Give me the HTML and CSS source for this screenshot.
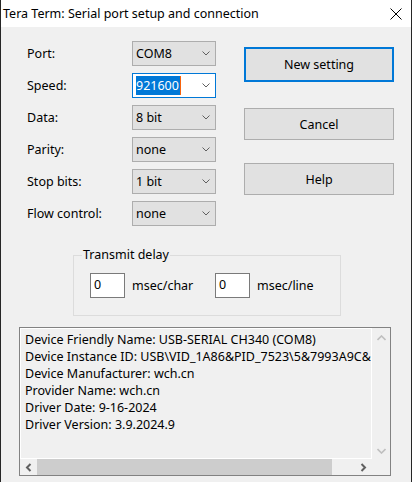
FILE: index.html
```html
<!DOCTYPE html>
<html lang="en">
<head>
  <meta charset="UTF-8">
  <title>Tera Term: Serial port setup and connection</title>
  <link rel="stylesheet" href="styles.css">
</head>
<body>
  <div class="window">
    <div class="titlebar">
      <span class="title">Tera Term: Serial port setup and connection</span>
      <svg class="close" width="12" height="12" viewBox="0 0 12 12">
        <path d="M0.5 0.5L11.5 11.5M11.5 0.5L0.5 11.5" stroke="#000" stroke-width="1" fill="none"/>
      </svg>
    </div>
    <div class="dialog">
      <div class="top">
        <div class="form">
          <label>Port:</label>
          <div class="combo"><span>COM8</span><svg class="chev" width="8" height="5" viewBox="0 0 8 5"><polyline points="0.5,0.5 4,4 7.5,0.5"/></svg></div>
          <label>Speed:</label>
          <div class="combo edit"><span class="sel">921600</span><span class="caret"></span><svg class="chev" width="8" height="5" viewBox="0 0 8 5"><polyline points="0.5,0.5 4,4 7.5,0.5"/></svg></div>
          <label>Data:</label>
          <div class="combo"><span>8 bit</span><svg class="chev" width="8" height="5" viewBox="0 0 8 5"><polyline points="0.5,0.5 4,4 7.5,0.5"/></svg></div>
          <label>Parity:</label>
          <div class="combo"><span>none</span><svg class="chev" width="8" height="5" viewBox="0 0 8 5"><polyline points="0.5,0.5 4,4 7.5,0.5"/></svg></div>
          <label>Stop bits:</label>
          <div class="combo"><span>1 bit</span><svg class="chev" width="8" height="5" viewBox="0 0 8 5"><polyline points="0.5,0.5 4,4 7.5,0.5"/></svg></div>
          <label>Flow control:</label>
          <div class="combo"><span>none</span><svg class="chev" width="8" height="5" viewBox="0 0 8 5"><polyline points="0.5,0.5 4,4 7.5,0.5"/></svg></div>
        </div>
        <div class="buttons">
          <button class="btn default">New setting</button>
          <button class="btn cancel">Cancel</button>
          <button class="btn help">Help</button>
        </div>
      </div>

      <fieldset class="delay">
        <legend>Transmit delay</legend>
        <div class="delay-row">
          <div class="delay-item"><div class="field">0</div><span>msec/char</span></div>
          <div class="delay-item"><div class="field">0</div><span>msec/line</span></div>
        </div>
      </fieldset>

      <div class="info">
        <div class="info-text">
          <p>Device Friendly Name: USB-SERIAL CH340 (COM8)</p>
          <p>Device Instance ID: USB\VID_1A86&amp;PID_7523\5&amp;7993A9C&amp;</p>
          <p>Device Manufacturer: wch.cn</p>
          <p>Provider Name: wch.cn</p>
          <p>Driver Date: 9-16-2024</p>
          <p>Driver Version: 3.9.2024.9</p>
        </div>
        <div class="vscroll">
          <svg width="9" height="6" viewBox="0 0 9 6"><polyline points="0.5,5 4.5,1 8.5,5"/></svg>
          <svg width="9" height="6" viewBox="0 0 9 6"><polyline points="0.5,1 4.5,5 8.5,1"/></svg>
        </div>
        <div class="hscroll">
          <div class="arrow"><svg width="7" height="9" viewBox="0 0 7 9"><polyline points="5.5,1 2,4.5 5.5,8"/></svg></div>
          <div class="thumb"></div>
          <div class="arrow right"><svg width="7" height="9" viewBox="0 0 7 9"><polyline points="1.5,1 5,4.5 1.5,8"/></svg></div>
        </div>
        <div class="corner"></div>
      </div>
    </div>
  </div>
</body>
</html>
```

FILE: styles.css
```css
:root {
  --face: #f0f0f0;
  --ctl: #e1e1e1;
  --ctl-border: #adadad;
  --accent: #0078d7;
}
* { box-sizing: border-box; margin: 0; padding: 0; }
body {
  background: var(--face);
  font-family: 'Noto Sans', 'Liberation Sans', sans-serif;
  font-size: 12.5px;
  color: #000;
}
.window {
  width: 412px;
  height: 482px;
  background: var(--face);
  border-left: 1px solid #262626;
  border-right: 1px solid #262626;
  overflow: hidden;
}
.titlebar {
  height: 27px;
  background: #fff;
  display: flex;
  align-items: center;
  justify-content: space-between;
  padding: 0 9px 0 2px;
}
.title { line-height: 16px; }
.dialog { padding: 14px 0 0 18px; }

/* top part: form + buttons */
.top { display: flex; margin-left: 8px; }
.form {
  display: grid;
  grid-template-columns: 105px 84px;
  grid-template-rows: repeat(6, 25px);
  row-gap: 7px;
  align-items: center;
}
.combo {
  height: 25px;
  display: flex;
  align-items: center;
  justify-content: space-between;
  padding: 0 5px 0 3px;
  background: var(--ctl);
  border: 1px solid var(--ctl-border);
}
.combo.edit {
  background: #fff;
  border-color: var(--accent);
  justify-content: flex-start;
}
.combo.edit .chev { margin-left: auto; }
.sel {
  background: var(--accent);
  color: #fff;
  line-height: 19px;
  padding-right: 1px;
}
.caret {
  width: 1px;
  height: 19px;
  background: #f7630c;
}
.chev polyline { fill: none; stroke: #606060; stroke-width: 1; }

.buttons {
  display: flex;
  flex-direction: column;
  margin-left: 28px;
  width: 150px;
}
.btn {
  font: inherit;
  color: #000;
  background: var(--ctl);
  border: 1px solid var(--ctl-border);
  height: 32px;
}
.btn.default {
  margin-top: 6px;
  height: 35px;
  border: 2px solid var(--accent);
}
.btn.cancel { margin-top: 26px; }
.btn.help { margin-top: 23px; }

/* transmit delay group */
.delay {
  margin: 21px 0 0 54px;
  width: 266px;
  border: 1px solid #dcdcdc;
  padding: 10px 0 17px 8px;
}
.delay legend {
  padding: 0 1px;
  line-height: 16px;
}
.delay-row {
  display: flex;
  padding-left: 8px;
}
.delay-item {
  display: flex;
  align-items: center;
  gap: 7px;
  width: 125px;
}
.field {
  width: 35px;
  height: 25px;
  background: #fff;
  border: 1px solid #7a7a7a;
  padding: 3px 0 0 3px;
  line-height: 16px;
}

/* device info box */
.info {
  margin-top: 11px;
  width: 372px;
  height: 149px;
  border: 1px solid #828282;
  display: grid;
  grid-template-columns: 352px 18px;
  grid-template-rows: 131px 16px;
}
.info-text {
  border: 1px solid #fff;
  padding: 2px 4px;
  line-height: 17px;
  white-space: nowrap;
  overflow: hidden;
}
.vscroll {
  display: flex;
  flex-direction: column;
  align-items: center;
  justify-content: space-between;
  padding: 7px 0 5px 0;
}
.vscroll polyline { fill: none; stroke: #bfbfbf; stroke-width: 1.6; }
.hscroll { display: flex; }
.hscroll .arrow {
  width: 17px;
  display: flex;
  align-items: center;
  justify-content: center;
}
.hscroll .arrow.right { margin-left: auto; }
.hscroll polyline { fill: none; stroke: #606060; stroke-width: 2; }
.thumb {
  width: 295px;
  background: #cdcdcd;
}
.corner { background: var(--face); }
```
